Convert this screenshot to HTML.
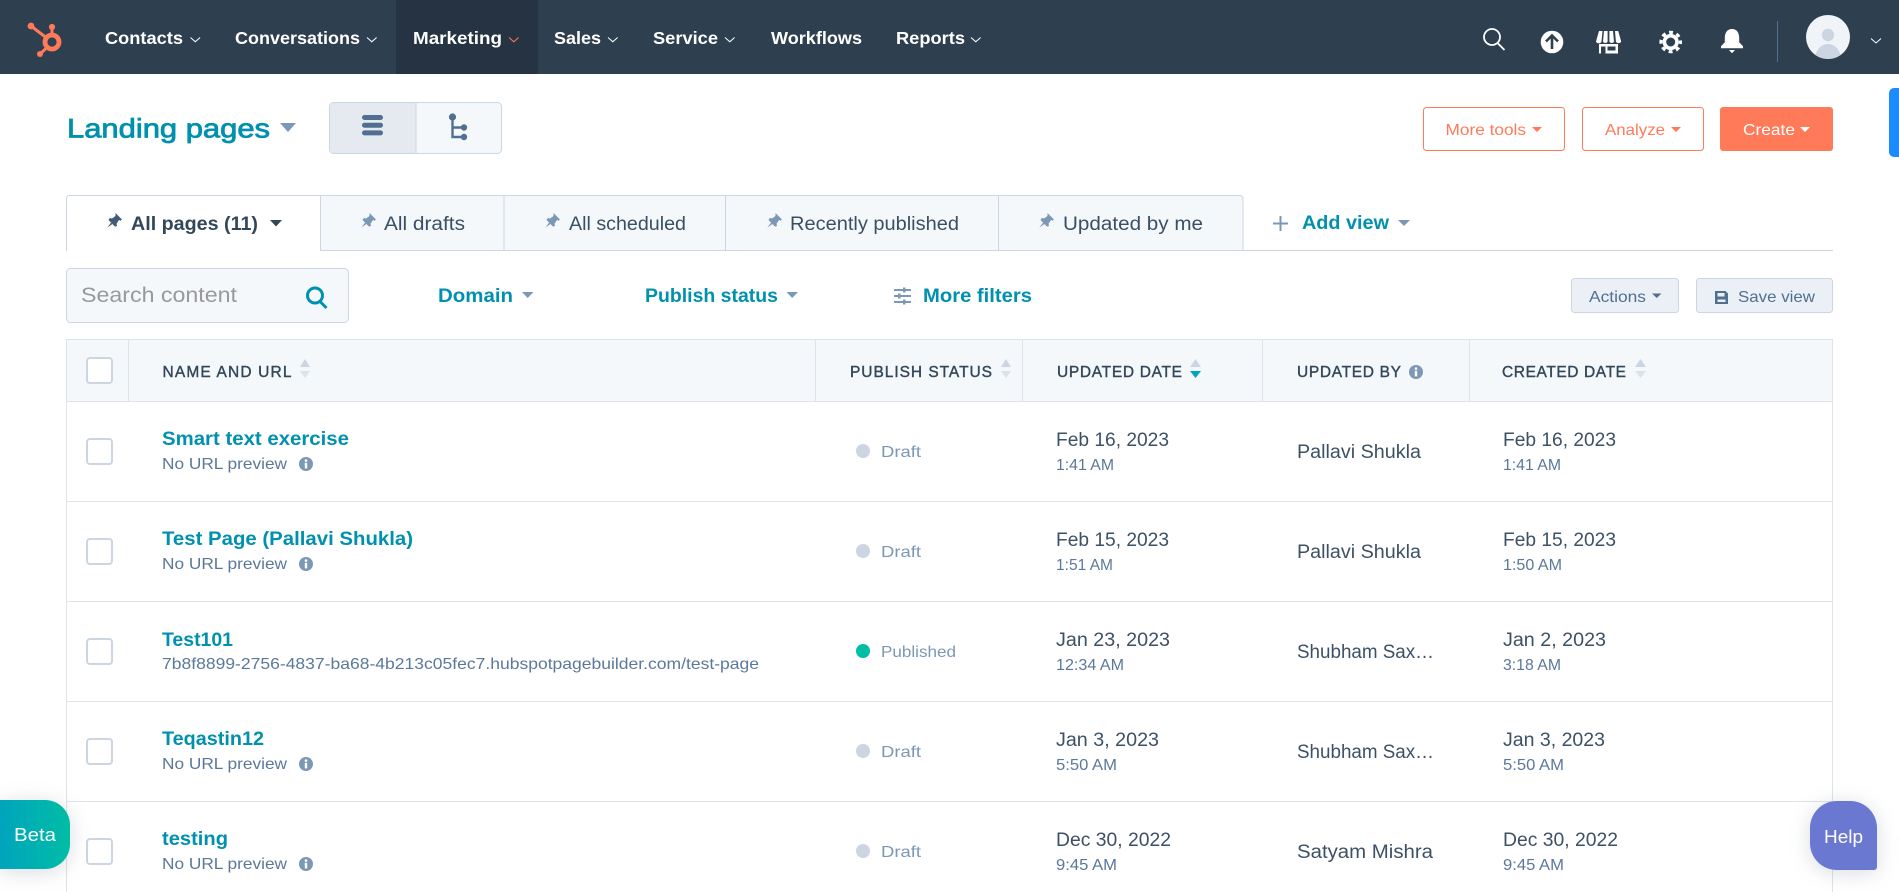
<!DOCTYPE html>
<html lang="en"><head><meta charset="utf-8"><title>Landing pages</title>
<style>
html,body{margin:0;padding:0;background:#fff;width:1899px;height:892px;overflow:hidden}
svg{display:block;position:absolute;left:0;top:0}
text{font-family:"Liberation Sans",sans-serif;white-space:pre}
.nav{font-size:17.5px;font-weight:700;fill:#fff}
.tab{font-size:19px;fill:#3a4f65}
.lnk{font-size:19.5px;font-weight:700;fill:#0091ae}
.hd{font-size:15.5px;fill:#33475b;stroke:#33475b;stroke-width:.4}
.sub{font-size:16px;fill:#5b789a}
.st{font-size:16px;fill:#7c98b6}
.dt{font-size:19px;fill:#3d5166}
.btn{font-size:16px;fill:#ff7a59}
</style></head><body>
<svg width="1899" height="892" viewBox="0 0 1899 892" xmlns="http://www.w3.org/2000/svg">
<defs>
<linearGradient id="bg" x1="0" x2="1" y1="0" y2="0"><stop offset="0" stop-color="#00a4bd"/><stop offset="1" stop-color="#00bda5"/></linearGradient>
<clipPath id="av"><circle cx="1828" cy="37" r="22"/></clipPath>
<g id="pin"><path d="M8.5 0L15 6.5L13.5 7.7L12 7L9.5 10.8L10 13L8 13.6L1.5 7L2.8 5L5 5.5L8.5 3Z"/><path d="M4 9.6L0.3 14.6L5.4 11Z"/></g>
<g id="info"><circle r="7" fill="#7c98b6"/><circle cy="-3.4" r="1.3" fill="#fff"/><rect x="-1.2" y="-1.2" width="2.4" height="5.6" fill="#fff"/></g>
<g id="cb"><rect x="1" y="1" width="25" height="25" rx="3" fill="#fff" stroke="#cbd6e2" stroke-width="2"/></g>
</defs>

<!-- nav -->
<rect width="1899" height="74" fill="#2e3f50"/>
<rect x="396" width="142" height="74" fill="#253342"/>
<g fill="#ff7a59" stroke="#ff7a59">
<circle cx="52" cy="42" r="7" fill="none" stroke-width="4.8"/>
<path d="M31 26L46 37.5M52 27V34M40 54L47 47.5" stroke-width="3" fill="none"/>
<circle cx="31" cy="26" r="3.4" stroke="none"/><circle cx="52" cy="27" r="3.1" stroke="none"/><circle cx="40" cy="54" r="3" stroke="none"/>
</g>
<text class="nav" x="105" y="44" textLength="78" lengthAdjust="spacingAndGlyphs">Contacts</text>
<text class="nav" x="235" y="44" textLength="125" lengthAdjust="spacingAndGlyphs">Conversations</text>
<text class="nav" x="413" y="44" textLength="89" lengthAdjust="spacingAndGlyphs">Marketing</text>
<text class="nav" x="554" y="44" textLength="47" lengthAdjust="spacingAndGlyphs">Sales</text>
<text class="nav" x="653" y="44" textLength="65" lengthAdjust="spacingAndGlyphs">Service</text>
<text class="nav" x="771" y="44" textLength="91" lengthAdjust="spacingAndGlyphs">Workflows</text>
<text class="nav" x="896" y="44" textLength="69" lengthAdjust="spacingAndGlyphs">Reports</text>
<g fill="none" stroke="#fff" stroke-width="1">
<path d="M190.500 37.500l4.800 4.300l4.800-4.300M367 37.500l4.800 4.300l4.800-4.300M608 37.500l4.800 4.300l4.800-4.300M725 37.500l4.800 4.300l4.800-4.300M971 37.500l4.800 4.300l4.800-4.300M1871 38.500l5 4.500l5-4.500"/>
<path d="M509 37.500l4.800 4.300l4.800-4.300" stroke="#ff7a59"/>
</g>
<!-- right icons -->
<g fill="none" stroke="#fff" stroke-width="1.800"><circle cx="1492" cy="37" r="8"/><path d="M1497.500 43L1504.500 50"/></g>
<circle cx="1552" cy="42" r="11.300" fill="#fff"/>
<path d="M1552 49V35.500M1546 41.500L1552 35.500L1558 41.500" fill="none" stroke="#2e3f50" stroke-width="2.600"/>
<g fill="#fff">
<path d="M1599 31h3.500l-1 10.500a3 3 0 0 1-5.500 0zM1604 31h3.600v10.500a2.500 2.500 0 0 1-4.600 0zM1609.400 31h3.600l1 10.500a2.500 2.500 0 0 1-4.600 0zM1615 31h3.200l3 10.500a3 3 0 0 1-5.300 0z"/>
<path fill-rule="evenodd" d="M1599 44h19v9.500h-19zM1601 46.500v7h4.500v-7zM1607.500 46.500v4h8v-4z"/>
<path d="M1732 29c-5 0-7.200 4-7.200 9v4.200l-3.800 4v2h22v-2l-3.800-4V38c0-5-2.200-9-7.200-9z"/><path d="M1729 50h6l-3 3.200z"/>
</g>
<circle cx="1670.700" cy="42" r="6.300" fill="none" stroke="#fff" stroke-width="3.600"/>
<circle cx="1670.700" cy="42" r="9.700" fill="none" stroke="#fff" stroke-width="3.200" stroke-dasharray="3.900 3.720" stroke-dashoffset="1.950"/>
<rect x="1777" y="21" width="1" height="41" fill="#516f90"/>
<circle cx="1828" cy="37" r="22" fill="#f0f3f7"/>
<g clip-path="url(#av)" fill="#cbd6e2"><circle cx="1828" cy="35" r="6.200"/><ellipse cx="1828" cy="59" rx="13" ry="15"/></g>

<!-- heading -->
<text x="67" y="137.500" font-size="27" fill="#0091ae" stroke="#0091ae" stroke-width=".8" textLength="203" lengthAdjust="spacingAndGlyphs">Landing pages</text>
<polygon points="280,123 296,123 288,132" fill="#7c98b6"/>
<rect x="329.500" y="102.500" width="172" height="51" rx="4" fill="#f5f8fa" stroke="#cbd6e2"/>
<path d="M416 103H333.500a3.500 3.500 0 0 0-3.500 3.500V149.500a3.500 3.500 0 0 0 3.500 3.500H416z" fill="#e5eaf1"/>
<rect x="415.500" y="103" width="1" height="50" fill="#cbd6e2"/>
<g fill="#516f90"><rect x="362" y="115" width="21" height="5" rx="2.500"/><rect x="362" y="122.700" width="21" height="5" rx="2.500"/><rect x="362" y="130.400" width="21" height="5" rx="2.500"/>
<circle cx="452.500" cy="117" r="3.600"/><circle cx="464" cy="127.500" r="3.200"/><circle cx="464" cy="137" r="3.200"/><path d="M451.300 117h2.400v9.300h10.300v2.400h-10.300v7.100h10.300v2.400h-12.700z"/></g>

<!-- action buttons -->
<rect x="1423.500" y="107.500" width="141" height="43" rx="3" fill="#fff" stroke="#ff7a59"/>
<text class="btn" x="1445.500" y="135" textLength="80.500" lengthAdjust="spacingAndGlyphs">More tools</text>
<polygon points="1532,127 1542,127 1537,132" fill="#ff7a59"/>
<rect x="1582.500" y="107.500" width="121" height="43" rx="3" fill="#fff" stroke="#ff7a59"/>
<text class="btn" x="1605" y="135" textLength="60" lengthAdjust="spacingAndGlyphs">Analyze</text>
<polygon points="1671,127 1681,127 1676,132" fill="#ff7a59"/>
<rect x="1720" y="107" width="113" height="44" rx="3" fill="#ff7a59"/>
<text class="btn" style="fill:#fff" x="1743" y="135" textLength="52" lengthAdjust="spacingAndGlyphs">Create</text>
<polygon points="1800,127 1810,127 1805,132" fill="#fff"/>
<path d="M1899 88H1894a5 5 0 0 0-5 5V152a5 5 0 0 0 5 5h5z" fill="#1a8cff"/>

<!-- tabs -->
<rect x="1243" y="250" width="590" height="1" fill="#cbd6e2"/>
<path d="M320.500 250.500V195.500H1240a3 3 0 0 1 3 3V250.500z" fill="#f5f8fa" stroke="#cbd6e2"/>
<path d="M66.500 251V198.500a3 3 0 0 1 3-3H320.500V251z" fill="#fff"/>
<path d="M66.500 251V198.500a3 3 0 0 1 3-3H320.500V251" fill="none" stroke="#cbd6e2"/>
<rect x="503.500" y="196" width="1" height="55" fill="#cbd6e2"/><rect x="725" y="196" width="1" height="55" fill="#cbd6e2"/><rect x="998" y="196" width="1" height="55" fill="#cbd6e2"/>
<use href="#pin" x="107" y="213" fill="#425b76"/>
<use href="#pin" x="361" y="213" fill="#7c98b6"/>
<use href="#pin" x="545" y="213" fill="#7c98b6"/>
<use href="#pin" x="767" y="213" fill="#7c98b6"/>
<use href="#pin" x="1039" y="213" fill="#7c98b6"/>
<text class="tab" x="131" y="230" font-weight="700" style="fill:#33475b" textLength="127" lengthAdjust="spacingAndGlyphs">All pages (11)</text>
<polygon points="270,220 282,220 276,226.500" fill="#33475b"/>
<text class="tab" x="384" y="230" textLength="81" lengthAdjust="spacingAndGlyphs">All drafts</text>
<text class="tab" x="569" y="230" textLength="117" lengthAdjust="spacingAndGlyphs">All scheduled</text>
<text class="tab" x="790" y="230" textLength="169" lengthAdjust="spacingAndGlyphs">Recently published</text>
<text class="tab" x="1063" y="230" textLength="140" lengthAdjust="spacingAndGlyphs">Updated by me</text>
<path d="M1280.500 216v15M1273 223.500h15" stroke="#7c98b6" stroke-width="2" fill="none"/>
<text class="lnk" x="1302" y="229" textLength="87" lengthAdjust="spacingAndGlyphs">Add view</text>
<polygon points="1398,220 1410,220 1404,226" fill="#7c98b6"/>

<!-- filters -->
<rect x="66.500" y="268.500" width="282" height="54" rx="4" fill="#f5f8fa" stroke="#cbd6e2"/>
<text x="81" y="302" font-size="21" fill="#999" textLength="156" lengthAdjust="spacingAndGlyphs">Search content</text>
<g fill="none" stroke="#0091ae" stroke-width="3"><circle cx="315" cy="295.500" r="7.500"/><path d="M320 301.500L326.500 308"/></g>
<text class="lnk" x="438" y="302" textLength="75" lengthAdjust="spacingAndGlyphs">Domain</text>
<polygon points="522,292 533.500,292 527.700,298" fill="#7c98b6"/>
<text class="lnk" x="645" y="302" textLength="133" lengthAdjust="spacingAndGlyphs">Publish status</text>
<polygon points="786.500,292 798,292 792.200,298" fill="#7c98b6"/>
<g fill="#7c98b6"><rect x="894" y="289" width="17" height="2"/><rect x="894" y="295" width="17" height="2"/><rect x="894" y="301" width="17" height="2"/><rect x="903" y="287.500" width="2.500" height="5"/><rect x="898" y="293.500" width="2.500" height="5"/><rect x="903" y="299.500" width="2.500" height="5"/></g>
<text class="lnk" x="923" y="302" textLength="109" lengthAdjust="spacingAndGlyphs">More filters</text>
<rect x="1571.500" y="278.500" width="107" height="34" rx="3" fill="#eaf0f6" stroke="#cbd6e2"/>
<text x="1589" y="302" font-size="16" fill="#516f90" textLength="57" lengthAdjust="spacingAndGlyphs">Actions</text>
<polygon points="1652,293.500 1661.500,293.500 1656.700,298" fill="#516f90"/>
<rect x="1696.500" y="278.500" width="136" height="34" rx="3" fill="#eaf0f6" stroke="#cbd6e2"/>
<path fill="#516f90" fill-rule="evenodd" d="M1715 291h10.500l2.500 2.500V304h-13zM1717.500 293v3.500h7V293zM1717.500 299.500v2.500h8v-2.500z"/>
<text x="1738" y="302" font-size="16" fill="#516f90" textLength="77" lengthAdjust="spacingAndGlyphs">Save view</text>

<!-- table -->
<rect x="66.500" y="339.500" width="1766" height="62" fill="#f5f8fa"/>
<path d="M66.500 892V339.500H1832.500V892" fill="none" stroke="#dfe3eb"/>
<g fill="#dfe3eb">
<rect x="67" y="401" width="1765" height="1"/><rect x="67" y="501" width="1765" height="1"/><rect x="67" y="601" width="1765" height="1"/><rect x="67" y="701" width="1765" height="1"/><rect x="67" y="801" width="1765" height="1"/>
<rect x="128" y="340" width="1" height="61"/><rect x="815" y="340" width="1" height="61"/><rect x="1022" y="340" width="1" height="61"/><rect x="1262" y="340" width="1" height="61"/><rect x="1469" y="340" width="1" height="61"/>
</g>
<use href="#cb" x="86" y="357"/>
<text class="hd" x="162.500" y="377" textLength="129" lengthAdjust="spacing">NAME AND URL</text>
<text class="hd" x="850" y="377" textLength="142" lengthAdjust="spacing">PUBLISH STATUS</text>
<text class="hd" x="1057" y="377" textLength="125" lengthAdjust="spacing">UPDATED DATE</text>
<text class="hd" x="1297" y="377" textLength="104" lengthAdjust="spacing">UPDATED BY</text>
<text class="hd" x="1502" y="377" textLength="124" lengthAdjust="spacing">CREATED DATE</text>
<g fill="#cbd6e2">
<path d="M300 367l5-8l5 8zM1001 367l5-8l5 8zM1190 367l5.500-8l5.500 8zM1635 367l5.500-8l5.500 8z"/>
</g>
<g fill="#dbe2ea"><path d="M300 371l5 7l5-7zM1001 371l5 7l5-7zM1635 371l5.500 7l5.500-7z"/></g>
<path d="M1190 371l5.500 7l5.500-7z" fill="#00a4bd"/>
<use href="#info" x="1416" y="372"/>

<!-- rows -->
<use href="#cb" x="86" y="438"/><use href="#cb" x="86" y="538"/><use href="#cb" x="86" y="638"/><use href="#cb" x="86" y="738"/><use href="#cb" x="86" y="838"/>
<text class="lnk" x="162" y="445" textLength="187" lengthAdjust="spacingAndGlyphs">Smart text exercise</text>
<text class="lnk" x="162" y="545" textLength="251" lengthAdjust="spacingAndGlyphs">Test Page (Pallavi Shukla)</text>
<text class="lnk" x="162" y="646" textLength="71" lengthAdjust="spacingAndGlyphs">Test101</text>
<text class="lnk" x="162" y="745" textLength="102" lengthAdjust="spacingAndGlyphs">Teqastin12</text>
<text class="lnk" x="162" y="845" textLength="66" lengthAdjust="spacingAndGlyphs">testing</text>
<text class="sub" x="162" y="469" textLength="125" lengthAdjust="spacingAndGlyphs">No URL preview</text>
<text class="sub" x="162" y="569" textLength="125" lengthAdjust="spacingAndGlyphs">No URL preview</text>
<text class="sub" x="162" y="669" textLength="597" lengthAdjust="spacingAndGlyphs">7b8f8899-2756-4837-ba68-4b213c05fec7.hubspotpagebuilder.com/test-page</text>
<text class="sub" x="162" y="769" textLength="125" lengthAdjust="spacingAndGlyphs">No URL preview</text>
<text class="sub" x="162" y="869" textLength="125" lengthAdjust="spacingAndGlyphs">No URL preview</text>
<use href="#info" x="306" y="464"/><use href="#info" x="306" y="564"/><use href="#info" x="306" y="764"/><use href="#info" x="306" y="864"/>

<circle cx="863" cy="451" r="7" fill="#cbd6e2"/><circle cx="863" cy="551" r="7" fill="#cbd6e2"/><circle cx="863" cy="651" r="7" fill="#00bda5"/><circle cx="863" cy="751" r="7" fill="#cbd6e2"/><circle cx="863" cy="851" r="7" fill="#cbd6e2"/>
<text class="st" x="881" y="457" textLength="40" lengthAdjust="spacingAndGlyphs">Draft</text>
<text class="st" x="881" y="557" textLength="40" lengthAdjust="spacingAndGlyphs">Draft</text>
<text class="st" x="881" y="657" textLength="75" lengthAdjust="spacingAndGlyphs">Published</text>
<text class="st" x="881" y="757" textLength="40" lengthAdjust="spacingAndGlyphs">Draft</text>
<text class="st" x="881" y="857" textLength="40" lengthAdjust="spacingAndGlyphs">Draft</text>

<text class="dt" x="1056" y="446" textLength="113" lengthAdjust="spacingAndGlyphs">Feb 16, 2023</text>
<text class="dt" x="1056" y="546" textLength="113" lengthAdjust="spacingAndGlyphs">Feb 15, 2023</text>
<text class="dt" x="1056" y="646" textLength="114" lengthAdjust="spacingAndGlyphs">Jan 23, 2023</text>
<text class="dt" x="1056" y="746" textLength="103" lengthAdjust="spacingAndGlyphs">Jan 3, 2023</text>
<text class="dt" x="1056" y="846" textLength="115" lengthAdjust="spacingAndGlyphs">Dec 30, 2022</text>
<text class="sub" x="1056" y="470" textLength="58" lengthAdjust="spacingAndGlyphs">1:41 AM</text>
<text class="sub" x="1056" y="570" textLength="57" lengthAdjust="spacingAndGlyphs">1:51 AM</text>
<text class="sub" x="1056" y="670" textLength="68" lengthAdjust="spacingAndGlyphs">12:34 AM</text>
<text class="sub" x="1056" y="770" textLength="61" lengthAdjust="spacingAndGlyphs">5:50 AM</text>
<text class="sub" x="1056" y="870" textLength="61" lengthAdjust="spacingAndGlyphs">9:45 AM</text>

<text class="dt" x="1297" y="458" textLength="124" lengthAdjust="spacingAndGlyphs">Pallavi Shukla</text>
<text class="dt" x="1297" y="558" textLength="124" lengthAdjust="spacingAndGlyphs">Pallavi Shukla</text>
<text class="dt" x="1297" y="658" textLength="137" lengthAdjust="spacingAndGlyphs">Shubham Sax…</text>
<text class="dt" x="1297" y="758" textLength="137" lengthAdjust="spacingAndGlyphs">Shubham Sax…</text>
<text class="dt" x="1297" y="858" textLength="136" lengthAdjust="spacingAndGlyphs">Satyam Mishra</text>

<text class="dt" x="1503" y="446" textLength="113" lengthAdjust="spacingAndGlyphs">Feb 16, 2023</text>
<text class="dt" x="1503" y="546" textLength="113" lengthAdjust="spacingAndGlyphs">Feb 15, 2023</text>
<text class="dt" x="1503" y="646" textLength="103" lengthAdjust="spacingAndGlyphs">Jan 2, 2023</text>
<text class="dt" x="1503" y="746" textLength="102" lengthAdjust="spacingAndGlyphs">Jan 3, 2023</text>
<text class="dt" x="1503" y="846" textLength="115" lengthAdjust="spacingAndGlyphs">Dec 30, 2022</text>
<text class="sub" x="1503" y="470" textLength="58" lengthAdjust="spacingAndGlyphs">1:41 AM</text>
<text class="sub" x="1503" y="570" textLength="59" lengthAdjust="spacingAndGlyphs">1:50 AM</text>
<text class="sub" x="1503" y="670" textLength="58" lengthAdjust="spacingAndGlyphs">3:18 AM</text>
<text class="sub" x="1503" y="770" textLength="61" lengthAdjust="spacingAndGlyphs">5:50 AM</text>
<text class="sub" x="1503" y="870" textLength="61" lengthAdjust="spacingAndGlyphs">9:45 AM</text>

<!-- floating -->
<path d="M0 800H45a25 25 0 0 1 25 25v19a25 25 0 0 1-25 25H0z" fill="url(#bg)" style="filter:drop-shadow(0 3px 10px rgba(45,62,80,.18))"/>
<text x="14" y="841" font-size="18.500" fill="#fff" textLength="42" lengthAdjust="spacingAndGlyphs">Beta</text>
<path d="M1837 801h13a27 27 0 0 1 27 27v39a3 3 0 0 1-3 3h-37a27 27 0 0 1-27-27v-15a27 27 0 0 1 27-27z" fill="#6a78d1" style="filter:drop-shadow(0 3px 10px rgba(45,62,80,.18))"/>
<text x="1824" y="843" font-size="18.500" fill="#fff" textLength="39" lengthAdjust="spacingAndGlyphs">Help</text>
</svg>
</body></html>
